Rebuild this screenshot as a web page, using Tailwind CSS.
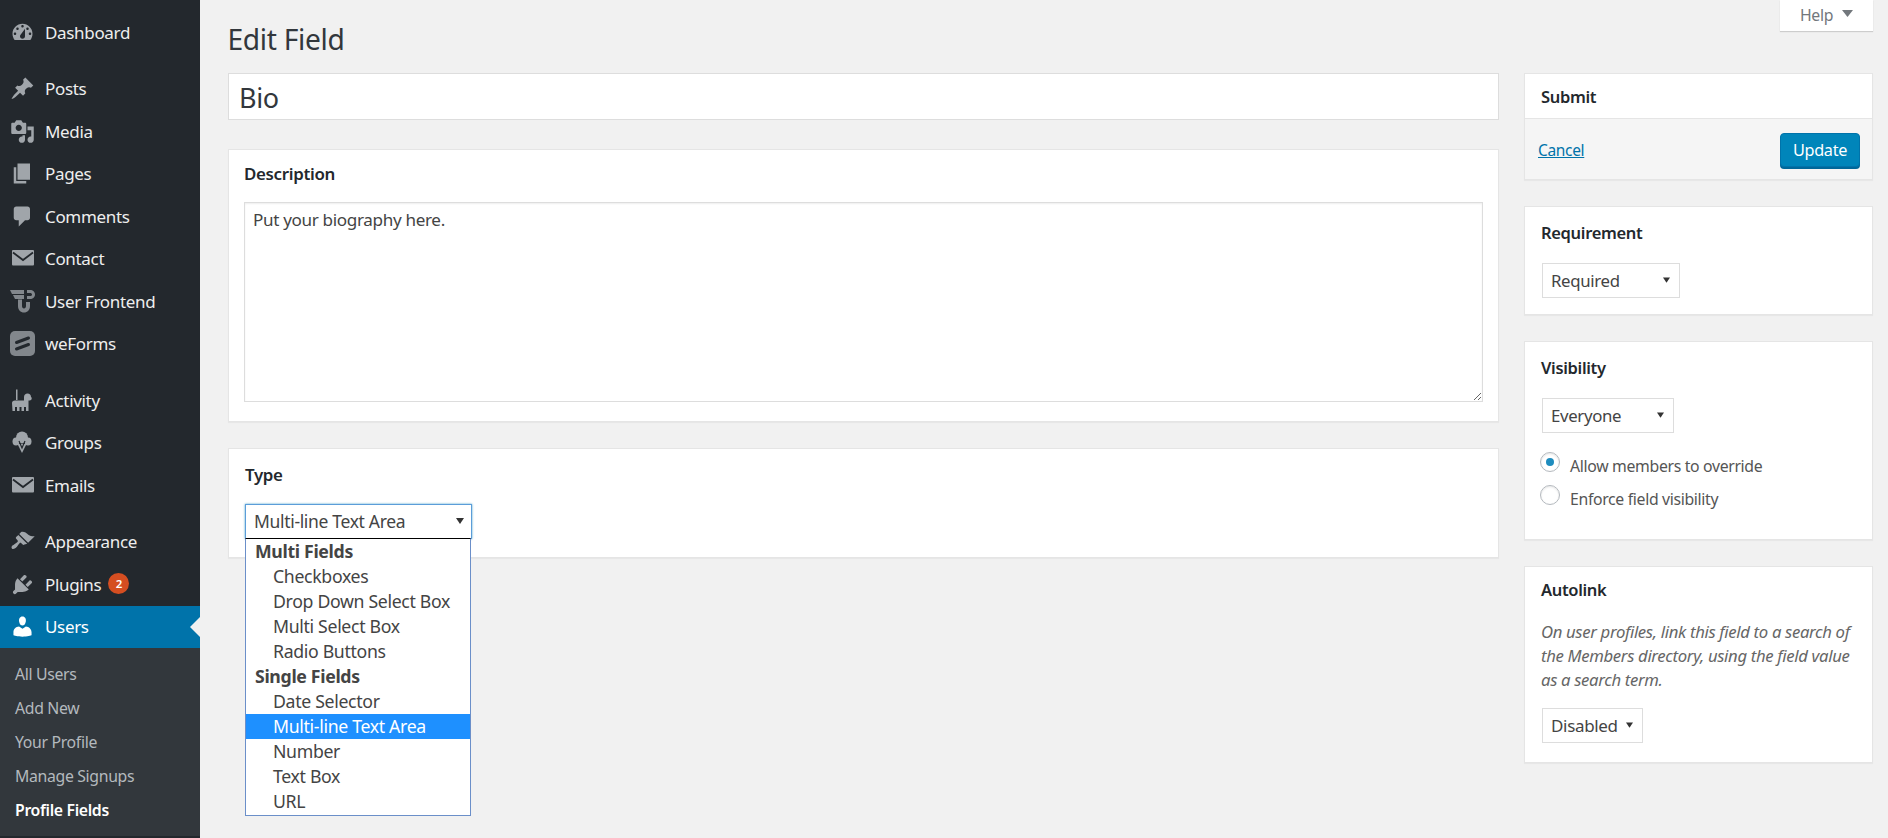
<!DOCTYPE html>
<html lang="en">
<head>
<meta charset="utf-8">
<title>Edit Field</title>
<script src="https://cdn.jsdelivr.net/npm/@tailwindcss/browser@4"></script>
</head>
<body class="m-0 bg-[#f1f1f1] font-['Noto_Sans',sans-serif] text-[16.5px] tracking-[-0.02em] text-[#444] overflow-hidden">
<div class="flex w-[1888px] h-[838px] overflow-hidden">
  <aside class="w-[200px] shrink-0 bg-[#23282d] text-[17px] leading-[25px] text-[#eee] pt-[11px]">
    <nav class="flex flex-col">
      <a class="flex items-center h-[42.5px] mb-[14px]"><span class="w-[45px] flex justify-center text-[#a0a5aa]"><svg class="w-[25px] h-[25px]" viewBox="0 0 20 20" fill="currentColor"><path d="M3.76 16h12.48c1.1-1.37 1.76-3.11 1.76-5 0-4.42-3.58-8-8-8s-8 3.58-8 8c0 1.89.66 3.63 1.76 5zM10 4c.55 0 1 .45 1 1s-.45 1-1 1-1-.45-1-1 .45-1 1-1zM6 6c.55 0 1 .45 1 1s-.45 1-1 1-1-.45-1-1 .45-1 1-1zm8 0c.55 0 1 .45 1 1s-.45 1-1 1-1-.45-1-1 .45-1 1-1zm-5.37 5.55L12 7v6c0 1.1-.9 2-2 2s-2-.9-2-2c0-.57.24-1.08.63-1.45zM4 10c.55 0 1 .45 1 1s-.45 1-1 1-1-.45-1-1 .45-1 1-1zm12 0c.55 0 1 .45 1 1s-.45 1-1 1-1-.45-1-1 .45-1 1-1z"/></svg></span>Dashboard</a>
      <a class="flex items-center h-[42.5px]"><span class="w-[45px] flex justify-center text-[#a0a5aa]"><svg class="w-[25px] h-[25px]" viewBox="0 0 20 20" fill="currentColor"><path d="M10.44 3.02l1.82-1.82 6.36 6.35-1.83 1.82c-1.05-.68-2.48-.57-3.41.36l-.75.75c-.92.93-1.04 2.35-.35 3.41l-1.83 1.82-2.41-2.41-2.8 2.79c-.42.42-3.38 2.71-3.8 2.29s1.86-3.39 2.28-3.81l2.79-2.79L4.1 9.36l1.83-1.82c1.05.69 2.48.57 3.4-.36l.75-.75c.93-.92 1.05-2.35.36-3.41z"/></svg></span>Posts</a>
      <a class="flex items-center h-[42.5px]"><span class="w-[45px] flex justify-center text-[#a0a5aa]"><svg class="w-[25px] h-[25px]" viewBox="0 0 20 20" fill="currentColor"><path d="M13 11V4c0-.55-.45-1-1-1h-1.67L9 1H5L3.67 3H2c-.55 0-1 .45-1 1v7c0 .55.45 1 1 1h10c.55 0 1-.45 1-1zM7 4.5c1.38 0 2.5 1.12 2.5 2.5S8.38 9.5 7 9.5 4.5 8.38 4.5 7 5.62 4.5 7 4.5zM14 6h5v10.5c0 1.38-1.12 2.5-2.5 2.5S14 17.88 14 16.5s1.12-2.5 2.5-2.5c.17 0 .34.02.5.05V9h-3V6zm-4 8.05V13h2v3.5c0 1.38-1.12 2.5-2.5 2.5S7 17.88 7 16.5 8.12 14 9.5 14c.17 0 .34.02.5.05z"/></svg></span>Media</a>
      <a class="flex items-center h-[42.5px]"><span class="w-[45px] flex justify-center text-[#a0a5aa]"><svg class="w-[25px] h-[25px]" viewBox="0 0 20 20" fill="currentColor"><path d="M6 15V2h10v13H6zm-1 1h8v2H3V5h2v11z"/></svg></span>Pages</a>
      <a class="flex items-center h-[42.5px]"><span class="w-[45px] flex justify-center text-[#a0a5aa]"><svg class="w-[25px] h-[25px]" viewBox="0 0 20 20" fill="currentColor"><path d="M5 2h9c1.1 0 2 .9 2 2v7c0 1.1-.9 2-2 2h-2l-5 5v-5H5c-1.1 0-2-.9-2-2V4c0-1.1.9-2 2-2z"/></svg></span>Comments</a>
      <a class="flex items-center h-[42.5px]"><span class="w-[45px] flex justify-center text-[#a0a5aa]"><svg class="w-[25px] h-[25px]" viewBox="0 0 25 25"><rect x="2" y="4" width="22" height="15.500" rx="1" fill="currentColor"/><path d="M3 6.500L13 14l10-7.500" fill="none" stroke="#23282d" stroke-width="1.800"/></svg></span>Contact</a>
      <a class="flex items-center h-[42.5px]"><span class="w-[45px] flex justify-center text-[#82878c]"><svg class="w-[25px] h-[25px]" viewBox="0 0 25 25" fill="currentColor"><path d="M0 1h14v4H2zM3 6h11v4H5zM17 1h3c3 0 5 2 5 4.500S23 10 20 10h-3V7h3c1 0 2-.5 2-1.500S21 4 20 4h-3zM8 10.500h4V17c0 1.500.8 2.500 2 2.500s2-1 2-2.500v-4h4v4c0 4-2.500 6.500-6 6.500s-6-2.500-6-6.500z"/></svg></span>User Frontend</a>
      <a class="flex items-center h-[42.5px] mb-[14px]"><span class="w-[45px] flex justify-center text-[#82878c]"><svg class="w-[25px] h-[25px]" viewBox="0 0 25 25"><rect width="25" height="25" rx="5" fill="currentColor"/><path d="M6.500 11.500L18.500 7M6.500 18L18.500 13.500" stroke="#23282d" stroke-width="3" stroke-linecap="round"/></svg></span>weForms</a>
      <a class="flex items-center h-[42.5px]"><span class="w-[45px] flex justify-center text-[#a0a5aa]"><svg class="w-[25px] h-[25px]" viewBox="0 0 25 25" fill="currentColor"><path d="M6 1.500h1.500V12H6zM2 15c0-1.500 1-2.500 3-2.500h9V9c0-2 1.500-3.500 3.500-3.500 2.200 0 3.500 1.500 3.500 3.500 1 .5 1 2 0 3-.8.5-1.500.5-2.500.5V23h-2.500v-4h-2v4h-2.500v-4h-2v4H7v-4H5v4H2.500z"/></svg></span>Activity</a>
      <a class="flex items-center h-[42.5px]"><span class="w-[45px] flex justify-center text-[#a0a5aa]"><svg class="w-[25px] h-[25px]" viewBox="0 0 25 25" fill="currentColor"><circle cx="12" cy="7.500" r="6"/><ellipse cx="6" cy="11.500" rx="3.500" ry="4"/><ellipse cx="18" cy="11.500" rx="3.500" ry="4"/><path d="M7.500 14h9L12 23z"/><path d="M9 11l3 7 3-7" fill="none" stroke="#23282d" stroke-width="1.200"/></svg></span>Groups</a>
      <a class="flex items-center h-[42.5px] mb-[14px]"><span class="w-[45px] flex justify-center text-[#a0a5aa]"><svg class="w-[25px] h-[25px]" viewBox="0 0 25 25"><rect x="2" y="4" width="22" height="15.500" rx="1" fill="currentColor"/><path d="M3 6.500L13 14l10-7.500" fill="none" stroke="#23282d" stroke-width="1.800"/></svg></span>Emails</a>
      <a class="flex items-center h-[42.5px]"><span class="w-[45px] flex justify-center text-[#a0a5aa]"><svg class="w-[25px] h-[25px]" viewBox="0 0 20 20" fill="currentColor"><path d="M14.48 11.06L7.41 3.99l1.5-1.5c.5-.56 2.3-.47 3.51.32 1.21.8 1.43 1.28 2.91 2.1 1.18.64 2.45 1.26 4.45.85zm-.71.71L6.7 4.7 4.93 6.47c-.39.39-.39 1.02 0 1.41l1.06 1.06c.39.39.39 1.03 0 1.42-.6.6-1.43 1.11-2.21 1.69-.35.26-.7.53-1.01.84C1.43 13.23.76 14.7 1.5 15.5c.75.8 2.28.43 3.63-.93.3-.3.58-.65.84-1 .58-.78 1.09-1.61 1.69-2.21.39-.39 1.02-.39 1.41 0l1.06 1.06c.39.39 1.02.39 1.41 0z"/></svg></span>Appearance</a>
      <a class="flex items-center h-[42.5px]"><span class="w-[45px] flex justify-center text-[#a0a5aa]"><svg class="w-[25px] h-[25px]" viewBox="0 0 20 20" fill="currentColor"><path d="M13.11 4.36L9.87 7.6 8 5.73l3.24-3.24c.35-.34 1.05-.2 1.56.32.52.51.66 1.21.31 1.55zm-8 1.77l.91-1.12 9.01 9.01-1.19.84c-.71.71-2.63 1.16-3.82 1.16H6.14L4.9 17.26c-.59.59-1.54.59-2.12 0-.59-.58-.59-1.53 0-2.12l1.24-1.24v-3.88c0-1.13.4-3.19 1.09-3.89zm7.26 3.97l3.24-3.24c.34-.35 1.04-.21 1.55.31.52.51.66 1.21.31 1.55l-3.24 3.25z"/></svg></span>Plugins<span class="ml-[7px] -mt-[1px] w-[21px] h-[21px] rounded-full bg-[#d54e21] text-white text-[11.5px] font-semibold flex items-center justify-center">2</span></a>
      <a class="relative flex items-center h-[42px] bg-[#0073aa] text-white"><span class="w-[45px] flex justify-center"><svg class="w-[25px] h-[25px]" viewBox="0 0 20 20" fill="currentColor"><path d="M10 9.25c-2.27 0-2.73-3.44-2.730-3.44C7 4.02 7.82 2 9.97 2c2.16 0 2.98 2.02 2.71 3.81 0 0-.41 3.44-2.68 3.44zm0 2.57L12.72 10c2.39 0 4.52 2.33 4.52 4.53v2.49s-3.65 1.13-7.24 1.13c-3.65 0-7.24-1.13-7.24-1.13v-2.49c0-2.25 1.94-4.48 4.47-4.48z"/></svg></span>Users<span class="absolute right-0 top-[11px] w-0 h-0 border-y-[10px] border-y-transparent border-r-[10px] border-r-[#f1f1f1]"></span></a>
    </nav>
    <ul class="bg-[#32373c] pt-[9px] pb-[9px] text-[15.8px] leading-[24px] text-[#b4b9be]">
      <li class="h-[34px] pl-[15px] flex items-center">All Users</li>
      <li class="h-[34px] pl-[15px] flex items-center">Add New</li>
      <li class="h-[34px] pl-[15px] flex items-center">Your Profile</li>
      <li class="h-[34px] pl-[15px] flex items-center">Manage Signups</li>
      <li class="h-[34px] pl-[15px] flex items-center font-semibold text-white">Profile Fields</li>
    </ul>
  </aside>

  <main class="relative flex-1 min-w-0 pl-[28px] pr-[15px]">
    <div class="absolute right-[15px] top-0 w-[93px] h-[31px] bg-white shadow-[0_1px_1px_rgba(0,0,0,0.15)] flex items-center justify-center gap-[9px] text-[#72777c] text-[15.8px]">Help<svg class="w-[11px] h-[7px] -mt-[4px]" viewBox="0 0 11 7" fill="#72777c"><path d="M0 0h11L5.500 7z"/></svg></div>
    <h1 class="h-[73px] pt-[19px] -ml-[0.5px] text-[28.2px] leading-[40px] text-[#32373c] font-normal">Edit Field</h1>
    <div class="flex gap-[25px] items-start">
      <section class="relative w-[1271px] shrink-0">
        <div class="h-[47px] bg-white border border-[#ddd] pl-[10px] pt-[3px] flex items-center text-[27px] text-[#32373c]">Bio</div>
        <div class="mt-[29px] h-[273px] bg-white border border-[#e5e5e5] shadow-[0_1px_1px_rgba(0,0,0,0.04)] px-[15px] pt-[11px]">
          <h2 class="text-[16.9px] leading-[25px] font-semibold text-[#23282d]">Description</h2>
          <textarea class="block mt-[16px] w-[1239px] h-[200px] border border-[#ddd] bg-white px-[8px] pt-[4px] pb-[2px] text-[17.1px] leading-[25px] text-[#444] tracking-[-0.02em] shadow-[inset_0_1px_2px_rgba(0,0,0,0.07)] outline-none">Put your biography here.</textarea>
        </div>
        <div class="relative mt-[26px] h-[110px] bg-white border border-[#e5e5e5] shadow-[0_1px_1px_rgba(0,0,0,0.04)] px-[16px] pt-[13px]">
          <h2 class="text-[16.9px] leading-[25px] font-semibold text-[#23282d]">Type</h2>
          <div class="absolute left-[16px] top-[55px] w-[227px] h-[35px] bg-white border border-[#5b9dd9] shadow-[0_0_2px_rgba(30,140,190,0.8)] pl-[8px] pr-[7px] flex items-center justify-between text-[17.5px] text-[#444]">Multi-line Text Area<svg class="w-[8px] h-[6px] -mt-[2px]" viewBox="0 0 8 6" fill="#333"><path d="M0 0h8L4 6z"/></svg></div>
          <ul class="absolute z-10 left-[16px] top-[89px] w-[226px] h-[278px] bg-white border-x border-b border-x-[#6b8fc9] border-b-[#6b8fc9] border-t border-t-black text-[17.7px] leading-[24px] text-[#444]">
            <li class="h-[25px] pl-[9px] font-bold">Multi Fields</li>
            <li class="h-[25px] pl-[27px]">Checkboxes</li>
            <li class="h-[25px] pl-[27px]">Drop Down Select Box</li>
            <li class="h-[25px] pl-[27px]">Multi Select Box</li>
            <li class="h-[25px] pl-[27px]">Radio Buttons</li>
            <li class="h-[25px] pl-[9px] font-bold">Single Fields</li>
            <li class="h-[25px] pl-[27px]">Date Selector</li>
            <li class="h-[25px] pl-[27px] bg-[#1e90ff] text-white">Multi-line Text Area</li>
            <li class="h-[25px] pl-[27px]">Number</li>
            <li class="h-[25px] pl-[27px]">Text Box</li>
            <li class="h-[25px] pl-[27px]">URL</li>
          </ul>
        </div>
      </section>

      <section class="w-[349px] shrink-0 flex flex-col gap-[26px]">
        <div class="h-[107px] bg-white border border-[#e5e5e5] shadow-[0_1px_1px_rgba(0,0,0,0.04)]">
          <h2 class="h-[45px] pt-[3px] border-b border-[#e5e5e5] px-[16px] flex items-center font-semibold text-[#23282d]">Submit</h2>
          <div class="h-[60px] bg-[#f5f5f5] pl-[13px] pr-[12px] flex items-center justify-between">
            <a class="mt-[3px] text-[15.5px] text-[#0073aa] underline">Cancel</a>
            <button class="w-[80px] h-[34px] mt-[1px] pt-[2px] rounded-[4px] bg-[#0085ba] border border-[#0073aa] shadow-[0_2px_0_#006799] text-white text-[16.25px] tracking-[-0.02em]">Update</button>
          </div>
        </div>
        <div class="h-[109px] bg-white border border-[#e5e5e5] shadow-[0_1px_1px_rgba(0,0,0,0.04)] px-[16px] pt-[13px]">
          <h2 class="leading-[25px] font-semibold text-[#23282d]">Requirement</h2>
          <div class="mt-[18px] ml-[1px] w-[138px] h-[35px] bg-white border border-[#ddd] pl-[8px] pr-[9px] flex items-center justify-between text-[16.8px] text-[#444]">Required<svg class="w-[7px] h-[6px] -mt-[2px]" viewBox="0 0 8 6" fill="#333"><path d="M0 0h8L4 6z"/></svg></div>
        </div>
        <div class="h-[199px] bg-white border border-[#e5e5e5] shadow-[0_1px_1px_rgba(0,0,0,0.04)] px-[16px] pt-[13px]">
          <h2 class="leading-[25px] font-semibold text-[#23282d]">Visibility</h2>
          <div class="mt-[18px] ml-[1px] w-[132px] h-[35px] bg-white border border-[#ddd] pl-[8px] pr-[9px] flex items-center justify-between text-[16.8px] text-[#444]">Everyone<svg class="w-[7px] h-[6px] -mt-[2px]" viewBox="0 0 8 6" fill="#333"><path d="M0 0h8L4 6z"/></svg></div>
          <div class="mt-[19px] -ml-[1px] flex flex-col gap-[13px] text-[15.8px] leading-[20px] text-[#555]">
            <label class="flex gap-[10px] h-[20px]"><span class="w-[20px] h-[20px] rounded-full border border-[#b4b9be] bg-white shadow-[inset_0_1px_2px_rgba(0,0,0,0.1)] flex items-center justify-center"><span class="w-[8px] h-[8px] rounded-full bg-[#1e8cbe]"></span></span><span class="mt-[4px]">Allow members to override</span></label>
            <label class="flex gap-[10px] h-[20px]"><span class="w-[20px] h-[20px] rounded-full border border-[#b4b9be] bg-white shadow-[inset_0_1px_2px_rgba(0,0,0,0.1)]"></span><span class="mt-[4px]">Enforce field visibility</span></label>
          </div>
        </div>
        <div class="h-[197px] bg-white border border-[#e5e5e5] shadow-[0_1px_1px_rgba(0,0,0,0.04)] px-[16px] pt-[10px]">
          <h2 class="leading-[25px] font-semibold text-[#23282d]">Autolink</h2>
          <p class="mt-[18px] w-[318px] text-[16.7px] leading-[24px] italic text-[#666]">On user profiles, link this field to a search of the Members directory, using the field value as a search term.</p>
          <div class="mt-[16px] ml-[1px] w-[101px] h-[35px] bg-white border border-[#ddd] pl-[8px] pr-[9px] flex items-center justify-between text-[17px] text-[#444]">Disabled<svg class="w-[7px] h-[6px] -mt-[2px]" viewBox="0 0 8 6" fill="#333"><path d="M0 0h8L4 6z"/></svg></div>
        </div>
      </section>
    </div>
  </main>
</div>
</body>
</html>
